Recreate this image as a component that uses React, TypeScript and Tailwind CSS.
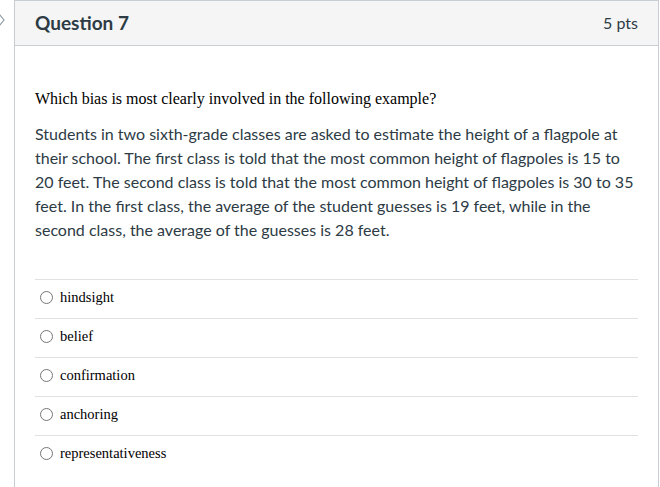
import React from 'react';

const answers = ['hindsight', 'belief', 'confirmation', 'anchoring', 'representativeness'];

export default function App() {
  return (
    <div className="flex h-[487px] w-[660px] overflow-hidden bg-white">
      <div className="w-[14px] shrink-0 pt-[13px]">
        <svg width="6" height="14" viewBox="0 0 6 14" className="-ml-[1px]">
          <path d="M0 1 L5 7 L0 13" fill="none" stroke="#8a97a3" strokeWidth="1.1" />
        </svg>
      </div>
      <div className="flex w-[645px] shrink-0 flex-col border-x border-t border-[#c7cdd1]">
        <div
          className="flex h-[45px] items-center justify-between border-b border-[#c7cdd1] bg-[#f5f5f5] px-5 text-[#2d3b45]"
          style={{ fontFamily: 'Lato, sans-serif' }}
        >
          <span className="text-[19px] font-bold">Question 7</span>
          <span className="text-[16px]">5 pts</span>
        </div>
        <div className="px-5 pt-[41px]">
          <p className="text-[16px] leading-6 text-black" style={{ fontFamily: '"Liberation Serif", serif' }}>
            Which bias is most clearly involved in the following example?
          </p>
          <p className="mt-[11px] text-[16px] leading-6 text-[#2d3b45]" style={{ fontFamily: 'Lato, sans-serif' }}>
            Students in two sixth-grade classes are asked to estimate the height of a flagpole at their school. The first class is told that the most common height of flagpoles is 15 to 20 feet. The second class is told that the most common height of flagpoles is 30 to 35 feet. In the first class, the average of the student guesses is 19 feet, while in the second class, the average of the guesses is 28 feet.
          </p>
          <div className="mt-[37px]">
            {answers.map((a) => (
              <div key={a} className="flex h-[39px] items-center border-t border-[#dfe1e3] pb-[3px] pl-[5px]">
                <span className="h-[13px] w-[13px] rounded-full border border-[#767676] bg-white" />
                <span className="ml-[7px] text-[14.5px] text-black" style={{ fontFamily: '"Liberation Serif", serif' }}>
                  {a}
                </span>
              </div>
            ))}
          </div>
        </div>
      </div>
    </div>
  );
}
